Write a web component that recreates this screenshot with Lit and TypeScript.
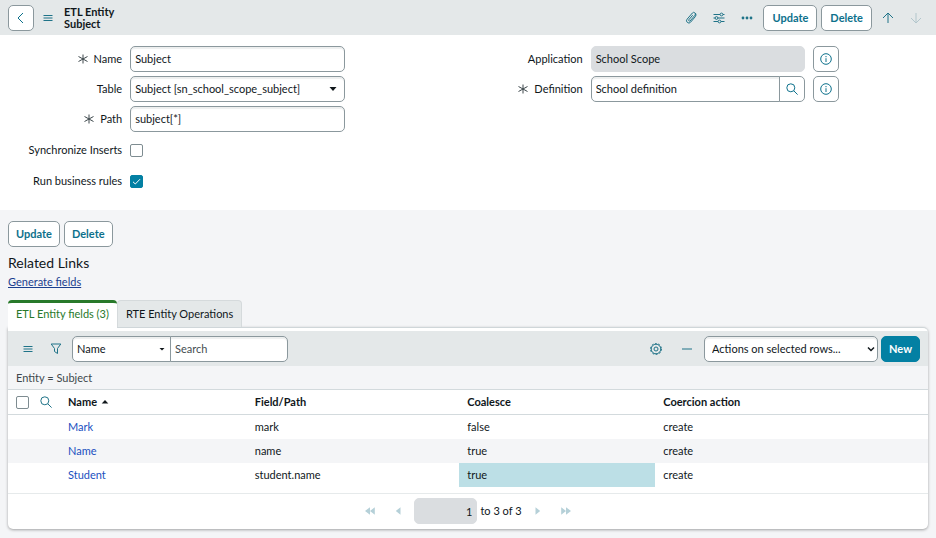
import { LitElement, html, css, svg, nothing } from "lit";
import { customElement, property, state } from "lit/decorators.js";
import { classMap } from "lit/directives/class-map.js";

const shapes: Record<string, unknown> = {
  back: svg`<path d="M10 3 5 8l5 5" />`,
  menu: svg`<path d="M3.500 5.500h9M3.500 8h9M3.500 10.500h9" />`,
  clip: svg`<path d="m12.200 6.800-4.600 5.400a2.300 2.300 0 0 1-3.500-3l5.300-6.200a1.700 1.700 0 0 1 2.600 2.200l-5 5.800a.9.9 0 0 1-1.300-1.100l4-4.700" /><path d="M12.200 6.800a3 3 0 0 0 .3-3.600" />`,
  sliders: svg`<path d="M2.500 4.500H9M12 4.500h1.500M2.500 8H4M7 8h6.500M2.500 11.500H7M10 11.500h3.500" /><circle cx="10.500" cy="4.500" r="1.400" /><circle cx="5.500" cy="8" r="1.400" /><circle cx="8.500" cy="11.500" r="1.400" />`,
  dots: svg`<g fill="currentColor" stroke="none"><circle cx="4" cy="8" r="1.400" /><circle cx="8" cy="8" r="1.400" /><circle cx="12" cy="8" r="1.400" /></g>`,
  up: svg`<path d="M8 13V3M3 8l5-5 5 5" />`,
  down: svg`<path d="M8 3v10M3 8l5 5 5-5" />`,
  info: svg`<circle cx="8" cy="8" r="5.300" /><path d="M8 7.200v3.800M8 5v1.200" />`,
  search: svg`<circle cx="6.800" cy="6.800" r="4" /><path d="m9.800 9.800 3.800 3.800" />`,
  funnel: svg`<path d="M3.200 3h9.600L9.500 7.500v5L6.500 10.500v-3z" />`,
  gear: svg`<circle cx="8" cy="8" r="4.800" /><circle cx="8" cy="8" r="5.500" stroke-dasharray="1.800 1.656" /><circle cx="8" cy="8" r="2" />`,
  minus: svg`<path d="M3 8h10" />`,
  chevron: svg`<path d="m5 6.500 3 3 3-3" stroke-width="1.500" />`,
  caret: svg`<path d="M4.500 6h7L8 10z" fill="currentColor" stroke="none" />`,
  caretSmall: svg`<path d="M5.500 7h5L8 9.500z" fill="currentColor" stroke="none" />`,
  sort: svg`<path d="M4.700 9.500h6.600L8 6z" fill="currentColor" stroke="none" />`,
  required: svg`<path d="M8 3.500v9M3.500 5.500l9 5M12.500 5.500l-9 5" />`,
  first: svg`<path d="M8 4.200v7.600L3 8zM12.800 4.200v7.600L8 8z" fill="currentColor" stroke="none" />`,
  prev: svg`<path d="M10.500 4.200v7.600L5.800 8z" fill="currentColor" stroke="none" />`,
  next: svg`<path d="M5.500 4.200v7.600L10.200 8z" fill="currentColor" stroke="none" />`,
  last: svg`<path d="M3.200 4.200v7.600L8 8zM8 4.200v7.600L13 8z" fill="currentColor" stroke="none" />`,
};

@customElement("ui-icon")
class UiIcon extends LitElement {
  @property() name = "";

  static styles = css`
    :host { display: inline-flex; flex: none; width: 16px; height: 16px; }
    svg { width: 100%; height: 100%; fill: none; stroke: currentColor; stroke-width: 1; }
  `;

  render() {
    return html`<svg viewBox="0 0 16 16" aria-hidden="true">${shapes[this.name]}</svg>`;
  }
}

interface Row { name: string; path: string; coalesce: string; action: string; selected?: boolean }

const rows: Row[] = [
  { name: "Mark", path: "mark", coalesce: "false", action: "create" },
  { name: "Name", path: "name", coalesce: "true", action: "create" },
  { name: "Student", path: "student.name", coalesce: "true", action: "create", selected: true },
];

@customElement("app-root")
class AppRoot extends LitElement {
  @state() private tab = 0;

  static styles = css`
    :host {
      display: block;
      min-height: 100vh;
      background: #f4f5f7;
      color: #10171b;
      font: 11px/16px Lato, "Open Sans", sans-serif;
    }
    * { box-sizing: border-box; }
    button, input, select { font: inherit; color: inherit; margin: 0; }
    button { cursor: pointer; }

    .header {
      display: flex;
      align-items: center;
      height: 35px;
      padding: 0 8px;
      background: #e4e8e9;
    }
    .title { flex: 1; margin: 0 0 0 4px; font-size: 11px; line-height: 12px; font-weight: 700; }
    .title span { display: block; }
    .actions { display: flex; align-items: center; gap: 4px; }
    .plain {
      display: inline-flex;
      align-items: center;
      justify-content: center;
      width: 24px;
      height: 26px;
      padding: 0;
      border: 0;
      background: none;
      color: #1f7388;
    }
    .plain:disabled { color: #b2c6cc; }
    .plain.menu { margin-left: 2px; }
    .btn {
      display: inline-flex;
      align-items: center;
      justify-content: center;
      height: 26px;
      padding: 0 8px;
      border: 1px solid #8b989d;
      border-radius: 5px;
      background: #fff;
      color: #0d718c;
      font-weight: 700;
    }
    .btn.square { width: 26px; padding: 0; }
    .btn.primary { border-color: #0380a3; background: #0380a3; color: #fff; padding: 0 7px; }

    .form {
      display: grid;
      grid-template-columns: 1fr 1fr;
      padding: 11px 8px 16px 7px;
      background: #fff;
    }
    .column { display: flex; flex-direction: column; gap: 4px; }
    .field {
      display: grid;
      grid-template-columns: 25% 1fr 26px 17.5%;
      column-gap: 8px;
      align-items: center;
      min-height: 26px;
    }
    .field.check { margin-top: 1px; }
    .field > label { display: flex; justify-content: flex-end; align-items: center; gap: 3px; white-space: nowrap; }
    .field > label ui-icon { color: #3c474b; }
    .text, .select select {
      width: 100%;
      height: 26px;
      padding: 0 4px 2px;
      border: 1px solid #8b989d;
      border-radius: 5px;
      background: #fff;
      box-shadow: inset 0 2px 1px #edefef;
      outline: none;
    }
    .text.readonly { border-color: #dadde0; background: #dadde0; box-shadow: none; }
    .select { position: relative; display: block; }
    .select select { appearance: none; padding: 0 20px 0 4px; }
    .select ui-icon { position: absolute; right: 4px; top: 5px; pointer-events: none; }
    .lookup { display: flex; }
    .lookup .text { flex: 1; min-width: 0; border-radius: 5px 0 0 5px; }
    .lookup .btn { margin-left: -1px; border-radius: 0 5px 5px 0; }

    .box {
      display: block;
      flex: none;
      appearance: none;
      width: 13px;
      height: 13px;
      border: 1px solid #7e8c91;
      border-radius: 2px;
      background: #fff;
    }
    .box:checked { border-color: #0380a3; background: #0380a3; }
    .tick { position: relative; display: flex; width: 13px; }
    .tick svg {
      position: absolute;
      inset: 0;
      fill: none;
      stroke: #fff;
      pointer-events: none;
    }

    .below { padding: 11px 8px 8px; }
    .buttons { display: flex; gap: 4px; }
    .buttons .btn { padding: 0 7px; }
    .below h2 { margin: 6px 0 0; font-size: 14px; line-height: 20px; font-weight: 400; }
    .link { color: #1b3f8f; }
    .generate { display: block; width: max-content; margin: 1px 0 10px; }

    .tabs { display: flex; }
    .tab {
      height: 27px;
      padding: 0 8px;
      border: 1px solid #d5dadc;
      border-bottom: 0;
      border-radius: 4px 4px 0 0;
      background: #e4e8e9;
    }
    .tab.active {
      position: relative;
      z-index: 1;
      height: 28px;
      margin-bottom: -1px;
      border: 0;
      border-top: 3px solid #28792a;
      padding: 0 8px 3px;
      background: #fff;
      color: #28792a;
    }
    .card {
      border-top: 1px solid #cfd6d9;
      border-radius: 0 5px 5px 5px;
      background: #fff;
      box-shadow: 0 1px 3px #00000059;
    }
    .toolbar {
      display: flex;
      align-items: center;
      height: 35px;
      margin-top: 3px;
      padding: 0 8px 0 6px;
      background: #e4e8e9;
    }
    .toolbar .plain { width: 28px; }
    .finder { display: flex; width: 216px; margin-left: 2px; }
    .finder .select { flex: 0 0 99px; }
    .finder .select select { border-radius: 5px 0 0 5px; }
    .finder .select ui-icon { right: 1px; }
    .finder .text { flex: 1; min-width: 0; margin-left: -1px; padding-bottom: 0; border-radius: 0 5px 5px 0; }
    .finder .text::placeholder { color: #444d51; opacity: 1; }
    .bulk { display: flex; align-items: center; gap: 3px; margin-left: auto; }
    .bulk .select { width: 174px; }
    .bulk .select select { padding-left: 7px; }
    .bulk .select ui-icon { right: -1px; }
    .crumb { padding: 4px 8px; background: #f4f5f7; color: #3e484c; line-height: 15px; }

    table { width: 100%; border-collapse: collapse; table-layout: fixed; }
    th, td { height: 24px; padding: 0 8px; text-align: left; }
    th { font-weight: 700; border: solid #d3dadd; border-width: 1px 0; }
    th.pick { width: 52px; }
    th.name { width: 20.3%; }
    th.path { width: 23.1%; }
    th.coalesce { width: 21.3%; }
    .pair { display: flex; align-items: center; gap: 5px; }
    .pair .plain { flex: none; height: 24px; }
    .sort { display: flex; align-items: center; }
    tbody tr:nth-child(even) { background: #f4f5f7; }
    td a { color: #1a50c0; text-decoration: none; }
    td.selected { background: #bcdfe6; }

    .pager {
      display: flex;
      align-items: center;
      justify-content: center;
      height: 36px;
      margin-top: 6px;
      border-top: 1px solid #e6eaeb;
      gap: 4px;
    }
    .pager .plain:disabled { color: #b5d0d8; }
    .pager .text { width: 63px; padding-bottom: 0; text-align: right; }
    .pager label { display: flex; align-items: center; gap: 3px; }
  `;

  private label(id: string, text: string, required = false) {
    return html`<label for=${id}>${required ? html`<ui-icon name="required"></ui-icon>` : nothing}${text}</label>`;
  }

  private plain(icon: string, label: string, disabled = false) {
    return html`<button class="plain" aria-label=${label} ?disabled=${disabled}><ui-icon name=${icon}></ui-icon></button>`;
  }

  private info(label: string) {
    return html`<button class="btn square" aria-label=${label}><ui-icon name="info"></ui-icon></button>`;
  }

  private check(id: string, text: string, on: boolean) {
    return html`<div class="field check">
      ${this.label(id, text)}
      <span class="tick"><input class="box" id=${id} type="checkbox" .checked=${on} />
        ${on ? html`<svg viewBox="0 0 13 13" aria-hidden="true"><path d="m3 6.800 2.300 2.200L10 4.200" /></svg>` : nothing}</span>
    </div>`;
  }

  render() {
    const tabs = ["ETL Entity fields (3)", "RTE Entity Operations"];
    return html`
      <header class="header">
        <button class="btn square" aria-label="Back"><ui-icon name="back"></ui-icon></button>
        <button class="plain menu" aria-label="Form menu"><ui-icon name="menu"></ui-icon></button>
        <h1 class="title"><span>ETL Entity</span><span>Subject</span></h1>
        <div class="actions">
          ${this.plain("clip", "Attachments")}${this.plain("sliders", "Personalize form")}${this.plain("dots", "More options")}
          <button class="btn">Update</button><button class="btn">Delete</button>
          ${this.plain("up", "Previous record")}${this.plain("down", "Next record", true)}
        </div>
      </header>

      <form class="form" @submit=${(e: Event) => e.preventDefault()}>
        <div class="column">
          <div class="field">${this.label("name", "Name", true)}<input class="text" id="name" value="Subject" /></div>
          <div class="field">
            ${this.label("table", "Table")}
            <span class="select"><select id="table"><option>Subject [sn_school_scope_subject]</option></select><ui-icon name="caret"></ui-icon></span>
          </div>
          <div class="field">${this.label("path", "Path", true)}<input class="text" id="path" value="subject[*]" /></div>
          ${this.check("sync", "Synchronize Inserts", false)}${this.check("rules", "Run business rules", true)}
        </div>
        <div class="column">
          <div class="field">
            ${this.label("application", "Application")}
            <input class="text readonly" id="application" value="School Scope" readonly />${this.info("About application")}
          </div>
          <div class="field">
            ${this.label("definition", "Definition", true)}
            <span class="lookup"><input class="text" id="definition" value="School definition" /><button class="btn square" aria-label="Look up definition"><ui-icon name="search"></ui-icon></button></span>
            ${this.info("About definition")}
          </div>
        </div>
      </form>

      <main class="below">
        <div class="buttons"><button class="btn">Update</button><button class="btn">Delete</button></div>
        <h2>Related Links</h2>
        <a class="link generate" href="#generate">Generate fields</a>

        <div class="tabs" role="tablist">
          ${tabs.map((t, i) => html`<button role="tab" aria-selected=${i === this.tab}
            class=${classMap({ tab: true, active: i === this.tab })} @click=${() => (this.tab = i)}>${t}</button>`)}
        </div>
        <section class="card">
          <div class="toolbar">
            ${this.plain("menu", "List menu")}${this.plain("funnel", "Filter")}
            <div class="finder">
              <span class="select"><select aria-label="Search column"><option>Name</option></select><ui-icon name="caretSmall"></ui-icon></span>
              <input class="text" placeholder="Search" aria-label="Search" />
            </div>
            <div class="bulk">
              ${this.plain("gear", "List settings")}${this.plain("minus", "Collapse list")}
              <span class="select"><select aria-label="Actions"><option>Actions on selected rows...</option></select><ui-icon name="chevron"></ui-icon></span>
              <button class="btn primary">New</button>
            </div>
          </div>
          <div class="crumb">Entity = Subject</div>
          <table>
            <thead>
              <tr>
                <th class="pick"><span class="pair"><input class="box" type="checkbox" aria-label="Select all" />
                  <button class="plain" aria-label="Search columns"><ui-icon name="search"></ui-icon></button></span></th>
                <th class="name"><span class="sort">Name<ui-icon name="sort"></ui-icon></span></th>
                <th class="path">Field/Path</th>
                <th class="coalesce">Coalesce</th>
                <th>Coercion action</th>
              </tr>
            </thead>
            <tbody>
              ${rows.map((r) => html`<tr>
                <td></td>
                <td><a href="#${r.name}">${r.name}</a></td>
                <td>${r.path}</td>
                <td class=${classMap({ selected: !!r.selected })}>${r.coalesce}</td>
                <td>${r.action}</td>
              </tr>`)}
            </tbody>
          </table>
          <nav class="pager" aria-label="Pages">
            ${this.plain("first", "First page", true)}${this.plain("prev", "Previous page", true)}
            <label><input class="text readonly" value="1" aria-label="Row" readonly />to 3 of 3</label>
            ${this.plain("next", "Next page", true)}${this.plain("last", "Last page", true)}
          </nav>
        </section>
      </main>
    `;
  }
}
